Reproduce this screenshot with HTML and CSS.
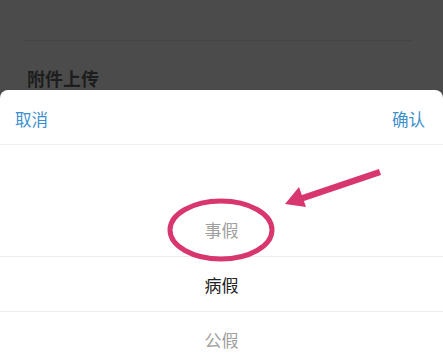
FILE: index.html
```html
<!DOCTYPE html>
<html lang="zh-CN">
<head>
    <meta charset="UTF-8">
    <meta name="viewport" content="width=device-width, initial-scale=1.0">
    <title>请假类型</title>
    <link rel="stylesheet" href="styles.css">
</head>
<body>
    <!-- page behind the mask -->
    <div class="page">
        <div class="divider"></div>
        <h2 class="section-title">附件上传</h2>
    </div>

    <!-- bottom picker sheet -->
    <div class="sheet">
        <div class="sheet-header">
            <span class="btn-cancel">取消</span>
            <span class="btn-ok">确认</span>
        </div>
        <div class="picker">
            <div class="picker-item"></div>
            <div class="picker-item faded line">事假</div>
            <div class="picker-item selected line">病假</div>
            <div class="picker-item faded">公假</div>
        </div>
    </div>

    <!-- annotation drawn on top -->
    <svg class="mark" width="443" height="356" viewBox="0 0 443 356">
        <ellipse cx="221" cy="230" rx="51" ry="29" fill="none" stroke="#d8366f" stroke-width="5"/>
        <line x1="380" y1="172" x2="300" y2="199" stroke="#d8366f" stroke-width="6.5" stroke-linecap="butt"/>
        <polygon points="285,204 299,187 306,207" fill="#d8366f"/>
    </svg>
</body>
</html>
```

FILE: styles.css
```css
/* Base */
body {
    margin: 0;
    width: 443px;
    height: 356px;
    overflow: hidden;
    background-color: #4b4b4b;
    font-family: "Noto Sans CJK SC", "Noto Sans", sans-serif;
    position: relative;
}

/* Page behind mask */
.page {
    height: 90px;
    padding-top: 40px;
    box-sizing: border-box;
}
.divider {
    margin: 0 31px 0 24px;
    border-top: 1px solid #444;
}
.section-title {
    margin: 27px 0 0 27px;
    font-size: 18px;
    line-height: 20px;
    font-weight: bold;
    color: #1d1d1d;
}

/* Sheet */
.sheet {
    background-color: #fff;
    border-radius: 8px 8px 0 0;
    height: 266px;
    overflow: hidden;
}
.sheet-header {
    display: flex;
    justify-content: space-between;
    align-items: center;
    height: 55px;
    padding: 3px 18px 0 15px;
    box-sizing: border-box;
    border-bottom: 1px solid #f0f0f0;
    font-size: 16.5px;
    color: #3b8fd0;
}

/* Picker */
.picker {
    padding-top: 2px;
}
.picker-item {
    height: 55px;
    display: flex;
    align-items: center;
    justify-content: center;
    font-size: 17px;
    box-sizing: border-box;
}
.picker-item.line {
    border-bottom: 1px solid #ececec;
}
.picker-item.faded {
    color: #a0a0a0;
}
.picker-item.selected {
    color: #222;
}

/* Annotation */
.mark {
    position: absolute;
    left: 0;
    top: 0;
}
```
